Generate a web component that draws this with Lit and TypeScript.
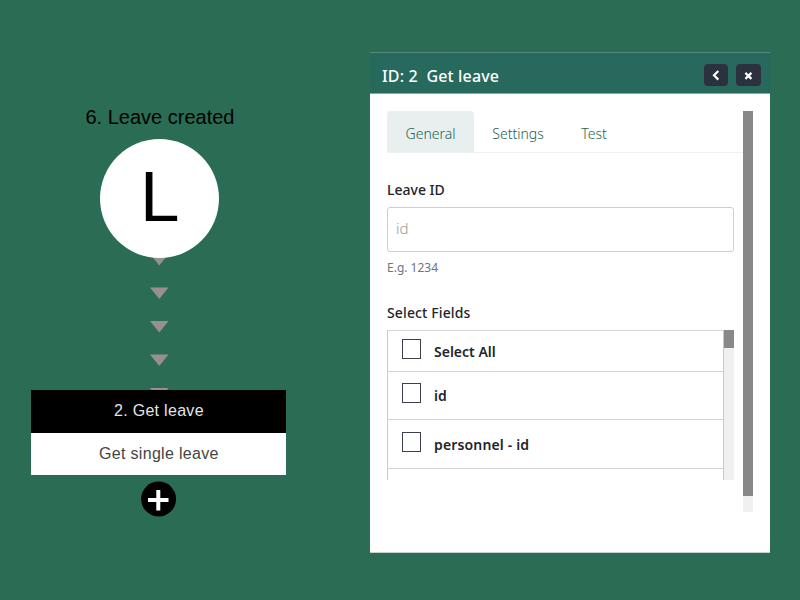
import { LitElement, html, css, svg } from "lit";
import { customElement, property } from "lit/decorators.js";

@customElement("flow-canvas")
class FlowCanvas extends LitElement {
  static styles = css`
    :host { display: block; position: relative; width: 370px; height: 600px; font-family: "Liberation Sans", Arial, sans-serif; }
    .arrows { position: absolute; left: 149px; top: 254px; }
    .title { position: absolute; left: 60px; width: 200px; top: 106px; text-align: center; font-size: 20px; line-height: 23px; color: #000; white-space: nowrap; }
    .circle { position: absolute; left: 100.3px; top: 139px; width: 119px; height: 119px; box-sizing: border-box; padding: 0 0 4px 0; border-radius: 50%; background: #fff; display: flex; align-items: center; justify-content: center; font-size: 71px; line-height: 71px; color: #000; }
    .node { position: absolute; left: 31.4px; top: 390px; width: 255px; height: 85px; font-size: 16px; display: flex; flex-direction: column; letter-spacing: 0.3px; }
    .node div { height: 42.5px; line-height: 41px; text-align: center; }
    .head { background: #000; color: #e4e4e4; }
    .body { background: #fff; color: #444; }
    .add { position: absolute; left: 141px; top: 481px; }
  `;
  render() {
    return html`
      <svg class="arrows" width="20" height="137" viewBox="0 0 20 137" fill="#988f8f">
        ${[0, 33.6, 67, 100.6, 134].map((y) => svg`<path d="M1 ${y}h18.5l-9.2 11.5z" />`)}
      </svg>
      <div class="title">6. Leave created</div>
      <div class="circle">L</div>
      <div class="node">
        <div class="head">2. Get leave</div>
        <div class="body">Get single leave</div>
      </div>
      <svg class="add" width="36" height="36" viewBox="0 0 36 36">
        <circle cx="17.6" cy="18" r="17.5" fill="#000" />
        <path d="M7 19h20.5M17.3 9v20.5" stroke="#fff" stroke-width="4" />
      </svg>
    `;
  }
}

@customElement("field-list")
class FieldList extends LitElement {
  static styles = css`
    :host { display: flex; width: 347px; height: 150px; overflow: hidden; }
    .rows { width: 335px; border: solid #c9c9c9; border-width: 0 1px; height: 150px; overflow: hidden; border-top: 1px solid #d6d6d6; }
    .row { display: flex; align-items: flex-start; box-sizing: border-box; height: 49px; padding: 12px 0 0 14px; border-bottom: 1px solid #d4d4d4; font-weight: 600; font-size: 14px; line-height: 24px; color: #212529; }
    .row:first-child { height: 41px; padding-top: 8px; }
    .row:nth-child(2) { height: 48px; padding-top: 11px; }
    .row span { letter-spacing: 0.15px; white-space: nowrap; padding-top: 1px; }
    .row:first-child span { letter-spacing: 0; }
    .box { box-sizing: border-box; width: 19px; height: 20px; border: 1px solid #3c404c; margin-right: 13px; }
    .track { width: 10px; background: #f0f0f0; }
    .thumb { height: 18px; background: #888; }
  `;
  @property({ attribute: false }) items: string[] = [];
  render() {
    return html`
      <div class="rows">
        ${this.items.map((t) => html`<div class="row"><i class="box"></i><span>${t}</span></div>`)}
      </div>
      <div class="track"><div class="thumb"></div></div>
    `;
  }
}

@customElement("app-root")
class AppRoot extends LitElement {
  static styles = css`
    :host { display: flex; width: 800px; height: 600px; overflow: hidden; background: #2b6c55; font-family: "Noto Sans", "Open Sans", sans-serif; }
    .panel { width: 400px; height: 501px; margin-top: 52px; background: #fff; box-sizing: border-box; border-bottom: 1px solid #c5d5ce; }
    header { box-sizing: border-box; height: 42px; background: #27695c; border-top: 1px solid #57887a; border-bottom: 1px solid #84aaa1; display: flex; align-items: center; padding: 3px 9px 0 12px; gap: 8px; color: #fff; }
    .title { flex: 1; padding-top: 2px; font-weight: 500; font-size: 16px; white-space: pre; letter-spacing: 0.15px; }
    .btn { width: 24px; height: 22px; border-radius: 4px; background: #2c3140; display: block; }
    .btn.close { width: 25px; }
    .content { display: flex; padding: 17px 17px 0; }
    .main { width: 356px; height: 401px; }
    nav { display: flex; height: 41.5px; box-sizing: border-box; border-bottom: 1.5px solid #ecf1f1; font-size: 14px; line-height: 46px; color: #226455; }
    .tab { width: 88px; text-align: center; white-space: nowrap; font-weight: 350; }
    .tab.on { width: 87px; height: 41px; background: #e9efee; border-radius: 4px 4px 0 0; }
    .tab.last { width: 64px; }
    .label { font-weight: 550; font-size: 14px; line-height: 20px; color: #212529; white-space: nowrap; }
    .first { margin-top: 27.5px; }
    .input { margin-top: 7px; box-sizing: border-box; width: 347px; height: 45px; border: 1px solid #cecece; border-radius: 3px; padding-left: 8px; font-size: 15px; line-height: 40px; font-weight: 300; color: #9a9a9a; }
    .help { margin-top: 7px; font-size: 12px; line-height: 18px; color: #6c757d; }
    .second { margin: 26px 0 7px; letter-spacing: 0.12px; }
    .track { width: 10px; height: 401px; background: #f0f0f0; }
    .thumb { height: 385px; background: #888; }
  `;
  render() {
    return html`
      <flow-canvas></flow-canvas>
      <section class="panel">
        <header>
          <div class="title">ID: 2  Get leave</div>
          <svg class="btn" viewBox="0 0 24 22"><path d="M14.3 7l-4.3 4.3 4.3 4.3" fill="none" stroke="#fff" stroke-width="2.2" /></svg>
          <svg class="btn close" viewBox="0 0 25 22"><path d="M9.4 8.9l6 6M15.4 8.9l-6 6" fill="none" stroke="#fff" stroke-width="2.2" /></svg>
        </header>
        <div class="content">
          <div class="main">
            <nav>
              <div class="tab on">General</div>
              <div class="tab">Settings</div>
              <div class="tab last">Test</div>
            </nav>
            <div class="label first">Leave ID</div>
            <div class="input">id</div>
            <div class="help">E.g. 1234</div>
            <div class="label second">Select Fields</div>
            <field-list .items=${["Select All", "id", "personnel - id", ""]}></field-list>
          </div>
          <div class="track"><div class="thumb"></div></div>
        </div>
      </section>
    `;
  }
}
